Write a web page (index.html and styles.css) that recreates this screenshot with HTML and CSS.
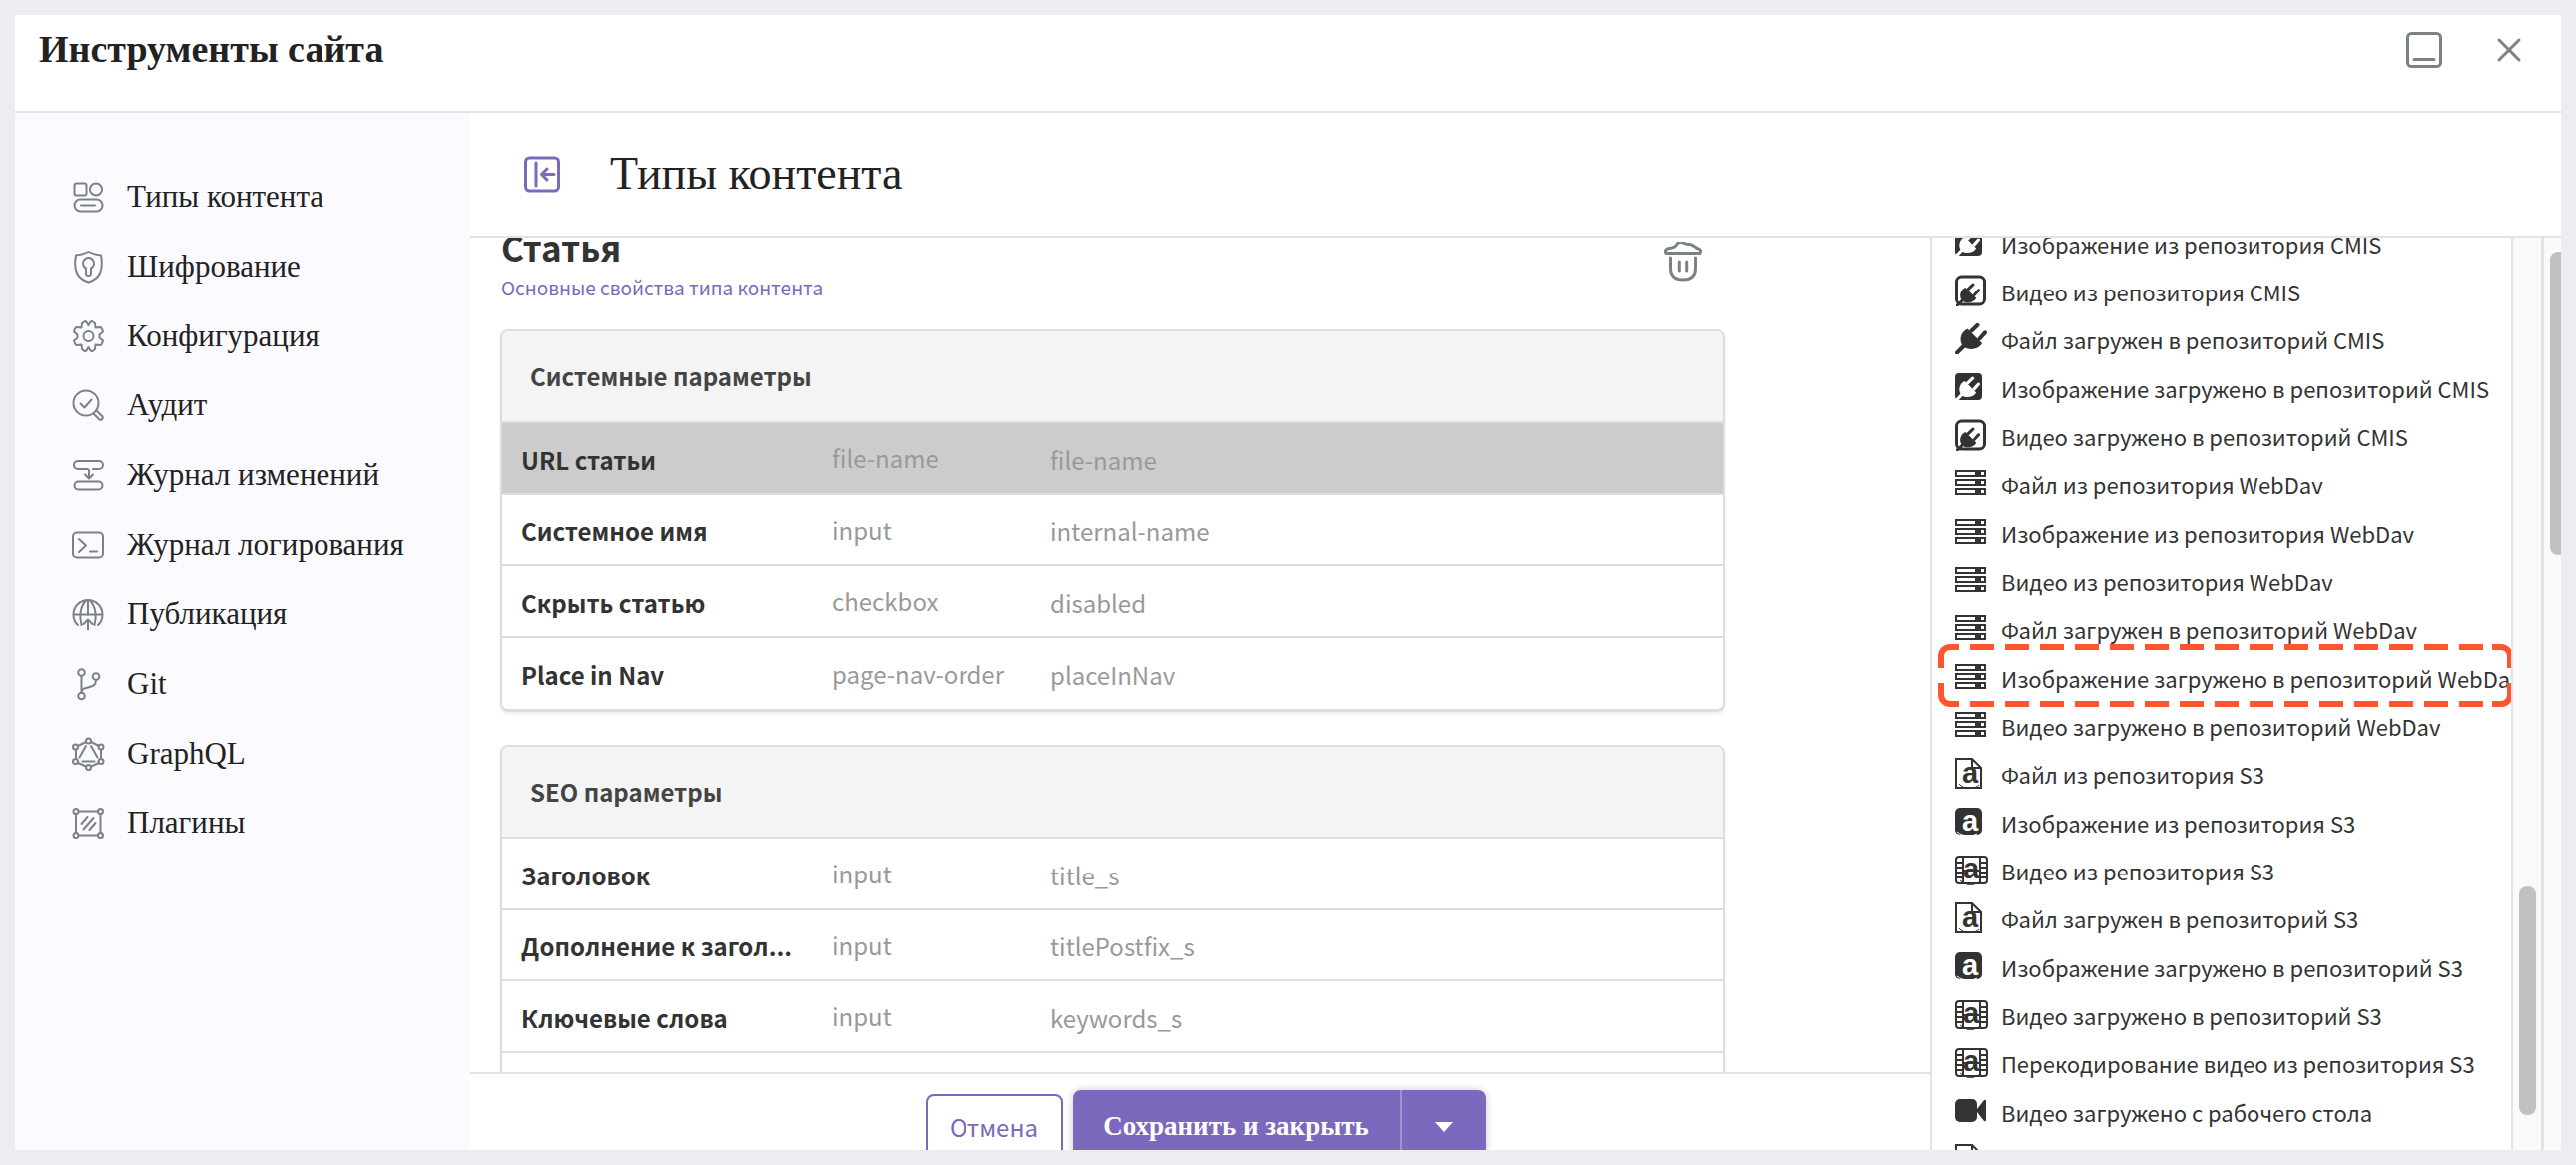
FILE: index.html
```html
<!DOCTYPE html>
<html lang="ru">
<head>
<meta charset="utf-8">
<title>Инструменты сайта</title>
<meta name="viewport" content="width=device-width, initial-scale=1">
<link rel="stylesheet" href="styles.css">
</head>
<body>
<svg class="sprite" aria-hidden="true">
  <symbol id="plug-shape" viewBox="0 0 32 32">
    <path d="M2 30.500L8.500 24" stroke="currentColor" stroke-width="4" stroke-linecap="round"/>
    <path d="M16.500 8.500L22.500 2.800M24.500 16.500L30 10.300" stroke="currentColor" stroke-width="4" stroke-linecap="round"/>
    <path d="M12.500 6.500L27 21C24 27 14 29 8.500 24.500C3 19 5.500 9.500 12.500 6.500Z" fill="currentColor"/>
  </symbol>
  <symbol id="i-plug" viewBox="0 0 34 32">
    <use href="#plug-shape" x="0" y="0" width="32" height="32"/>
  </symbol>
  <symbol id="i-plug-image" viewBox="0 0 34 32">
    <rect x="0" y="2" width="27" height="27" rx="4" fill="currentColor"/>
    <g color="#fff"><use href="#plug-shape" x="0" y="5" width="25" height="25"/></g>
  </symbol>
  <symbol id="i-plug-video" viewBox="0 0 34 32">
    <rect x="1.500" y="2" width="28" height="28" rx="5" fill="none" stroke="currentColor" stroke-width="3"/>
    <use href="#plug-shape" x="1" y="8" width="24" height="24"/>
  </symbol>
  <symbol id="i-server" viewBox="0 0 34 32">
    <path fill="currentColor" fill-rule="evenodd" d="M0 3h31v7H0zM2 5v3h18V5zM26 5v3h3V5zM0 12h31v7H0zM2 14v3h18v-3zM26 14v3h3v-3zM0 21h31v7H0zM2 23v3h18v-3zM26 23v3h3v-3z"/>
  </symbol>
  <symbol id="i-s3-file" viewBox="0 0 34 32">
    <path fill="none" stroke="currentColor" stroke-width="2" d="M1 2h16l9 9v20H1zM17 2v9h9"/>
    <text class="glyph-a" x="7" y="26">a</text>
    <path fill="none" stroke="currentColor" stroke-width="1" d="M4 27c5 6 15 6 20 1"/>
  </symbol>
  <symbol id="i-s3-image" viewBox="0 0 34 32">
    <rect x="0" y="2" width="27" height="27" rx="5" fill="currentColor"/>
    <text class="glyph-a light" x="7" y="25">a</text>
    <path fill="none" stroke="#fff" stroke-width="1" d="M2 26c6 5 14 5 20 2"/>
  </symbol>
  <symbol id="i-s3-video" viewBox="0 0 34 32">
    <path fill="none" stroke="currentColor" stroke-width="2" d="M4 3h25a3 3 0 0 1 3 3v21a3 3 0 0 1-3 3H4a3 3 0 0 1-3-3V6a3 3 0 0 1 3-3zM8 3v27M25 3v27M1 9h7M1 14h7M1 19h7M1 24h7M25 9h7M25 14h7M25 19h7M25 24h7M8 17h17"/>
    <text class="glyph-a" x="8" y="25">a</text>
    <path fill="none" stroke="currentColor" stroke-width="1" d="M5 27c6 6 15 6 21 0"/>
  </symbol>
  <symbol id="i-camera" viewBox="0 0 34 32">
    <rect x="0" y="4" width="22" height="23" rx="5" fill="currentColor"/>
    <path fill="currentColor" d="M22 14l7-9q2-1 2 1v19q0 2-2 1l-7-9z"/>
  </symbol>
  <symbol id="i-file" viewBox="0 0 34 32">
    <path fill="none" stroke="currentColor" stroke-width="2" d="M1 2h16l9 9v20H1zM17 2v9h9"/>
  </symbol>
</svg>

<div class="app">
  <header class="app-header">
    <h1>Инструменты сайта</h1>
    <div class="window-actions">
      <button type="button" aria-label="Свернуть">
        <svg class="icon-win" viewBox="0 0 40 40"><rect x="3.500" y="3.500" width="33" height="33" rx="4"/><path d="M10 29.500h20"/></svg>
      </button>
      <button type="button" aria-label="Закрыть">
        <svg class="icon-win" viewBox="0 0 40 40"><path d="M10 10l20 20M30 10L10 30"/></svg>
      </button>
    </div>
  </header>

  <div class="app-body">
    <nav class="sidebar" aria-label="Разделы">
      <ul>
        <li><a href="#types"><svg viewBox="0 0 32 32"><rect x="2.500" y="2.500" width="12" height="12" rx="2"/><circle cx="24" cy="8.500" r="6"/><rect x="2.500" y="18.500" width="28" height="12" rx="6"/><path d="M9 24.500h14"/></svg>Типы контента</a></li>
        <li><a href="#encryption"><svg viewBox="0 0 32 32"><path d="M16.500 1C21 3.500 25 4 29 4.500C30 10 30.500 17 28 22.500C26 27 21 30 16.500 31.500C12 30 7 27 5 22.500C2.500 17 3 10 4 4.500C8 4 12 3.500 16.500 1Z"/><path d="M14 17.500a5.500 5.500 0 1 1 5 0v5a2.500 2.500 0 0 1-5 0z"/></svg>Шифрование</a></li>
        <li><a href="#config"><svg viewBox="0 0 32 32"><path d="M12.300 1.500Q13.500 .5 14.500 1.800L16.500 5L18.500 1.800Q19.500 .5 20.800 1.500L23 3L23.500 7.500L28 7Q29.500 7 30 8.500L31 11.500L27.500 14.500L27.500 17.500L31 20.500L30 23.500Q29.500 25 28 25L23.500 24.500L23 29L20.800 30.800Q19.500 31.500 18.500 30.300L16.500 27L14.500 30.300Q13.500 31.500 12.300 30.800L10 29L9.500 24.500L5 25Q3.500 25 3 23.500L2 20.500L5.500 17.500L5.500 14.500L2 11.500L3 8.500Q3.500 7 5 7L9.500 7.500L10 3Z"/><circle cx="16.500" cy="16" r="5"/></svg>Конфигурация</a></li>
        <li><a href="#audit"><svg viewBox="0 0 32 32"><circle cx="14" cy="14" r="12.500"/><path d="M8.500 14.500l4 4 7-8M21.500 24.500l6 6q2 1 3-1t-1-3l-5-5"/></svg>Аудит</a></li>
        <li><a href="#changes"><svg viewBox="0 0 32 32"><path d="M14 10H6a4 4 0 0 1 0-8h21a4 4 0 0 1 0 8h-6M13 10h2q2 0 2 2v6M13 15.500l4 4 4-4"/><rect x="2.500" y="22.500" width="28" height="8" rx="4"/></svg>Журнал изменений</a></li>
        <li><a href="#log"><svg viewBox="0 0 32 32"><rect x="1" y="3.500" width="30" height="25" rx="4"/><path d="M7 10l7 6.500-7 6.500M18 22.500h7"/></svg>Журнал логирования</a></li>
        <li><a href="#publish"><svg viewBox="0 0 32 32"><path d="M6 27C3 24.500 1.500 20.500 1.500 16.500a14.500 14.500 0 0 1 29 0c0 4-1.500 8-4.500 10.500M1.500 16.500h29M9.500 27C7 18 8.500 8 14 2.500M22.500 27C25 18 23.500 8 18 2.500M16 2v15M16 31.500V22M11.500 26l4.500-4.500 4.500 4.500"/></svg>Публикация</a></li>
        <li><a href="#git"><svg viewBox="0 0 32 32"><circle cx="9.500" cy="4.500" r="3.300"/><circle cx="9.500" cy="28" r="3.300"/><circle cx="24" cy="8.500" r="3.300"/><path d="M9.500 8v16.500M24 12c0 6-4 6.500-8 7.500-3 .7-6 1-6.500 4"/></svg>Git</a></li>
        <li><a href="#graphql"><svg viewBox="0 0 32 32"><circle cx="16.500" cy="3" r="2.500"/><circle cx="16.500" cy="29.500" r="2.500"/><circle cx="3.500" cy="9" r="2.500"/><circle cx="29" cy="9" r="2.500"/><circle cx="3.500" cy="23.500" r="2.500"/><circle cx="29" cy="23.500" r="2.500"/><path d="M14 4L6 8M19 4l8 4M4 12v9M29 12v9M6 25l8 3.500M27 25l-8 3.500M14 8L7.500 19.500M19 8l6.500 11.500M10.500 23.500h12"/></svg>GraphQL</a></li>
        <li><a href="#plugins"><svg viewBox="0 0 32 32"><circle cx="4" cy="4.500" r="2.500"/><circle cx="28.500" cy="4.500" r="2.500"/><circle cx="4" cy="28.500" r="2.500"/><circle cx="28.500" cy="28.500" r="2.500"/><path d="M7 4.500h19M7 28.500h19M4 7.500v18M28.500 7.500v18M9.500 17l6-7M11.500 22.500L21.500 11M17.500 23l6-7"/></svg>Плагины</a></li>
      </ul>
    </nav>

    <section class="workspace">
      <header class="workspace-header">
        <button type="button" aria-label="Скрыть боковую панель">
          <svg class="icon-collapse" viewBox="0 0 40 40"><rect x="3.500" y="4" width="33" height="33" rx="4"/><path d="M14 9v23M32 20.500H20M25 15l-5.500 5.500L25 26"/></svg>
        </button>
        <h2>Типы контента</h2>
      </header>

      <div class="workspace-body">
        <div class="editor">
          <div class="form-scroll">
            <div class="form-head">
              <div>
                <h3>Статья</h3>
                <a class="props-link" href="#props">Основные свойства типа контента</a>
              </div>
              <button type="button" aria-label="Удалить">
                <svg class="icon-trash" viewBox="0 0 40 40"><path d="M3 11.500q-2-4 3-5q6-.5 8-4t6-1.500t6 1.500t8 4q5 1 3 5zM7.500 16v10.500q0 11.500 12.500 11.500t12.500-11.500V16M16.300 20v9M23.700 20v9"/></svg>
              </button>
            </div>

            <section class="card">
              <h4>Системные параметры</h4>
              <table>
                <tr class="selected"><th scope="row">URL статьи</th><td class="type">file-name</td><td>file-name</td></tr>
                <tr><th scope="row">Системное имя</th><td class="type">input</td><td>internal-name</td></tr>
                <tr><th scope="row">Скрыть статью</th><td class="type">checkbox</td><td>disabled</td></tr>
                <tr><th scope="row">Place in Nav</th><td class="type">page-nav-order</td><td>placeInNav</td></tr>
              </table>
            </section>

            <section class="card">
              <h4>SEO параметры</h4>
              <table>
                <tr><th scope="row">Заголовок</th><td class="type">input</td><td>title_s</td></tr>
                <tr><th scope="row">Дополнение к загол...</th><td class="type">input</td><td>titlePostfix_s</td></tr>
                <tr><th scope="row">Ключевые слова</th><td class="type">input</td><td>keywords_s</td></tr>
                <tr><th scope="row"></th><td class="type"></td><td></td></tr>
              </table>
            </section>
          </div>

          <footer class="actions">
            <button type="button" class="btn-cancel">Отмена</button>
            <div class="btn-split">
              <button type="button" class="btn-save">Сохранить и закрыть</button>
              <button type="button" class="btn-more" aria-label="Другие действия"><svg viewBox="0 0 20 10"><path d="M1 0h18l-9 10z"/></svg></button>
            </div>
          </footer>
        </div>

        <aside class="sources" aria-label="Источники данных">
          <ul>
            <li><svg><use href="#i-plug-image"/></svg>Изображение из репозитория CMIS</li>
            <li><svg><use href="#i-plug-video"/></svg>Видео из репозитория CMIS</li>
            <li><svg><use href="#i-plug"/></svg>Файл загружен в репозиторий CMIS</li>
            <li><svg><use href="#i-plug-image"/></svg>Изображение загружено в репозиторий CMIS</li>
            <li><svg><use href="#i-plug-video"/></svg>Видео загружено в репозиторий CMIS</li>
            <li><svg><use href="#i-server"/></svg>Файл из репозитория WebDav</li>
            <li><svg><use href="#i-server"/></svg>Изображение из репозитория WebDav</li>
            <li><svg><use href="#i-server"/></svg>Видео из репозитория WebDav</li>
            <li><svg><use href="#i-server"/></svg>Файл загружен в репозиторий WebDav</li>
            <li class="marked"><svg><use href="#i-server"/></svg>Изображение загружено в репозиторий WebDav
              <svg class="marker" viewBox="0 0 576 63" aria-hidden="true"><path d="M21 3H12a9 9 0 0 0-9 9v12M3 39v12a9 9 0 0 0 9 9h9M555 3h9a9 9 0 0 1 9 9v12M573 39v12a9 9 0 0 1-9 9h-9"/><path stroke-dasharray="24 11" d="M32 3h514M32 60h514"/></svg>
            </li>
            <li><svg><use href="#i-server"/></svg>Видео загружено в репозиторий WebDav</li>
            <li><svg><use href="#i-s3-file"/></svg>Файл из репозитория S3</li>
            <li><svg><use href="#i-s3-image"/></svg>Изображение из репозитория S3</li>
            <li><svg><use href="#i-s3-video"/></svg>Видео из репозитория S3</li>
            <li><svg><use href="#i-s3-file"/></svg>Файл загружен в репозиторий S3</li>
            <li><svg><use href="#i-s3-image"/></svg>Изображение загружено в репозиторий S3</li>
            <li><svg><use href="#i-s3-video"/></svg>Видео загружено в репозиторий S3</li>
            <li><svg><use href="#i-s3-video"/></svg>Перекодирование видео из репозитория S3</li>
            <li><svg><use href="#i-camera"/></svg>Видео загружено с рабочего стола</li>
            <li><svg><use href="#i-file"/></svg></li>
          </ul>
          <div class="track track-inner"><div class="thumb"></div></div>
        </aside>
        <div class="track track-outer"><div class="thumb"></div></div>
      </div>
    </section>
  </div>
</div>
</body>
</html>
```

FILE: styles.css
```css
:root {
  --purple: #7c68bc;
  --grey-icon: #7b8286;
  --line: #e3e3e3;
  --text: #333;
  --sans: "Noto Sans CJK SC", "Noto Sans", sans-serif;
  --serif: "Liberation Serif", serif;
}

* { box-sizing: border-box; }

body {
  margin: 0;
  padding: 15px;
  height: 100vh;
  overflow: hidden;
  background: #ecedf1;
  color: var(--text);
  font: 24px/32px var(--sans);
}

h1, h2, h3, h4, ul { margin: 0; padding: 0; }
ul { list-style: none; }
a { color: inherit; text-decoration: none; }

button {
  padding: 0;
  border: 0;
  background: none;
  font: inherit;
  color: inherit;
}
button svg { display: block; }

.sprite { position: absolute; width: 0; height: 0; }

.app {
  display: flex;
  flex-direction: column;
  height: 100%;
  overflow: hidden;
  background: #fff;
}

.app-header {
  display: flex;
  justify-content: space-between;
  align-items: flex-start;
  flex: none;
  height: 98px;
  padding: 12px 32px 0 24px;
  border-bottom: 2px solid var(--line);
}
.app-header h1 {
  font: bold 38px/44px var(--serif);
  color: #222;
}
.window-actions { display: flex; gap: 45px; padding-top: 3px; }

.icon-win, .icon-collapse, .icon-trash {
  width: 40px;
  height: 40px;
  fill: none;
  stroke: var(--grey-icon);
  stroke-width: 3;
  stroke-linecap: round;
  stroke-linejoin: round;
}
.icon-collapse { stroke: var(--purple); }

.app-body { display: flex; flex: 1; min-height: 0; }

.sidebar {
  flex: none;
  width: 456px;
  padding: 49px 0 0 57px;
  background: #fbfaff;
}
.sidebar li { height: 70px; }
.sidebar li:nth-child(3n) { height: 69px; }
.sidebar a {
  display: flex;
  align-items: center;
  gap: 23px;
  height: 100%;
  font: 31px/36px var(--serif);
  color: #222;
}
.sidebar svg {
  width: 32px;
  height: 32px;
  overflow: visible;
  fill: none;
  stroke: var(--grey-icon);
  stroke-width: 2;
  stroke-linecap: round;
  stroke-linejoin: round;
}

.workspace { display: flex; flex: 1; flex-direction: column; min-width: 0; }

.workspace-header {
  display: flex;
  align-items: center;
  gap: 48px;
  flex: none;
  height: 125px;
  padding: 0 0 2px 52px;
  border-bottom: 2px solid var(--line);
}
.workspace-header h2 {
  font: 46px/56px var(--serif);
  color: #222;
}

.workspace-body { display: flex; flex: 1; min-height: 0; }

.editor { display: flex; flex: 1; flex-direction: column; min-width: 0; }

.form-scroll {
  flex: 1;
  min-height: 0;
  overflow: hidden;
  padding: 0 205px 0 30px;
}
.form-head {
  display: flex;
  justify-content: space-between;
  align-items: flex-start;
  height: 92px;
  padding: 0 22px 0 1px;
}
.form-head h3 {
  margin-top: -18px;
  font: bold 35px/54px var(--sans);
}
.form-head button { padding-top: 4px; }
.props-link {
  display: block;
  font-size: 19px;
  line-height: 28px;
  color: var(--purple);
}

.card {
  overflow: hidden;
  margin-bottom: 33px;
  border: 2px solid #ddd;
  border-bottom-width: 3px;
  border-radius: 8px;
  box-shadow: 0 2px 3px rgba(0, 0, 0, .08);
}
.card h4 {
  height: 92px;
  padding-left: 28px;
  border-bottom: 2px solid #ddd;
  background: #f4f4f4;
  font: bold 24px/90px var(--sans);
  color: #444;
}
.card table {
  width: 100%;
  table-layout: fixed;
  border-spacing: 0;
}
.card tr { height: 72px; }
.card tr:nth-child(even) { height: 71px; }
.card th, .card td {
  padding: 3px 0 0 19px;
  border-bottom: 2px solid #ddd;
  text-align: left;
  color: #999;
  font-weight: normal;
}
.card tr:last-child > * { border-bottom: 0; }
.card th {
  overflow: hidden;
  width: 311px;
  padding-right: 10px;
  font-weight: bold;
  color: var(--text);
  text-overflow: ellipsis;
  white-space: nowrap;
}
.card .type { width: 219px; padding-top: 0; }
.card .selected { background: #ccc; }

.actions {
  display: flex;
  justify-content: center;
  align-items: center;
  gap: 10px;
  flex: none;
  height: 78px;
  padding-left: 10px;
  padding-top: 30px;
  border-top: 2px solid var(--line);
}
.btn-cancel {
  flex: none;
  width: 138px;
  height: 66px;
  border: 2px solid var(--purple);
  border-radius: 8px;
  color: var(--purple);
}
.btn-split {
  display: flex;
  flex: none;
  height: 74px;
  border-radius: 8px;
  background: var(--purple);
  box-shadow: 0 0 8px rgba(0, 0, 0, .2);
  color: #fff;
}
.btn-save {
  width: 327px;
  padding-bottom: 3px;
  font: bold 27px/36px var(--serif);
}
.btn-more {
  display: flex;
  justify-content: center;
  align-items: center;
  width: 86px;
  border-left: 2px solid #a092d0;
}
.btn-more svg { width: 20px; height: 10px; fill: #fff; }

.sources {
  display: flex;
  flex: none;
  width: 612px;
  overflow: hidden;
  border-left: 2px solid var(--line);
}
.sources ul {
  flex: 1;
  min-width: 0;
  overflow: hidden;
  margin-top: -16px;
  padding-left: 23px;
}
.sources li {
  position: relative;
  display: flex;
  gap: 12px;
  height: 48px;
  padding-top: 5px;
  font-size: 22px;
  line-height: 34px;
  white-space: nowrap;
}
.sources li:nth-child(3n) { height: 49px; }
.sources svg { flex: none; width: 34px; height: 32px; }

/* dashed frame over the highlighted source */
.sources .marker {
  position: absolute;
  top: -12px;
  left: -17px;
  width: 576px;
  height: 63px;
  fill: none;
  stroke: #ff552f;
  stroke-width: 6;
}
.glyph-a { font: bold 29px "Liberation Sans", sans-serif; fill: currentColor; }
.glyph-a.light { fill: #fff; }

.track { flex: none; background: #fafafa; }
.track-inner {
  width: 30px;
  padding: 650px 5px 0 6px;
  border-left: 2px solid var(--line);
}
.track-inner .thumb { height: 229px; }
.track-outer {
  width: 20px;
  overflow: hidden;
  padding: 14px 0 0 6px;
  border-left: 3px solid var(--line);
}
.track-outer .thumb { width: 18px; height: 304px; }
.thumb { border-radius: 8px; background: #c1c1c1; }
```
